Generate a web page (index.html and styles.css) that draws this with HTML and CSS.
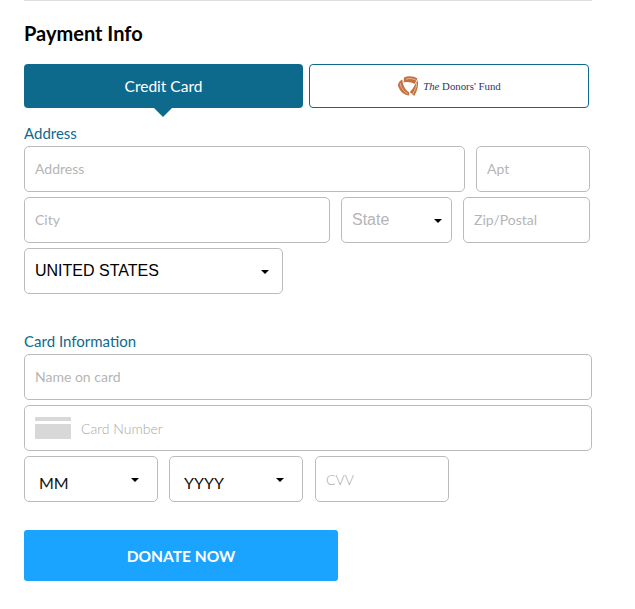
FILE: index.html
```html
<!DOCTYPE html>
<html lang="en">
<head>
    <meta charset="UTF-8">
    <title>Payment Info</title>
    <link rel="stylesheet" href="styles.css">
</head>
<body>
    <div class="payment">
        <h2 class="title">Payment Info</h2>

        <div class="tabs">
            <div class="tab tab-active">Credit Card</div>
            <div class="tab tab-fund">
                <svg class="fund-logo" width="22" height="22" viewBox="0 0 22 22">
                    <path fill="#c4703f" d="M7 2.5C11 .6 16 .8 20.5 3.5L17.6 9C15 7.3 10.5 6.4 6.6 7.4Z"/>
                    <path fill="#c4703f" d="M20.8 5C21.6 10 20.6 16 17.2 21L12.8 17C15 15 16.8 12.5 18 9.6Z"/>
                    <path fill="#c4703f" d="M12.2 20.6C7.5 20.4 2.4 16.4 1 10.5 .8 8 2.8 5.4 5.4 4.4 5.4 9 7.6 14.4 12.2 17.2Z"/>
                    <path fill="none" stroke="#fff" stroke-width=".5" d="M9 4.3C12 3 15.5 3.5 18.8 5M19.6 8C19.6 12 18 15.5 15.6 19M3.2 8C3.4 12 6.5 16.5 10.6 18.8"/>
                </svg>
                <span class="fund-name"><em>The</em> Donors' Fund</span>
            </div>
        </div>

        <div class="section-label address-label">Address</div>
        <div class="row">
            <div class="field w-address">Address</div>
            <div class="field w-apt">Apt</div>
        </div>
        <div class="row">
            <div class="field w-city">City</div>
            <div class="field select state w-state">State<span class="caret"></span></div>
            <div class="field w-zip">Zip/Postal</div>
        </div>
        <div class="row">
            <div class="field select country w-country">UNITED STATES<span class="caret"></span></div>
        </div>

        <div class="section-label card-label">Card Information</div>
        <div class="row">
            <div class="field w-full">Name on card</div>
        </div>
        <div class="row">
            <div class="field w-full card-number">
                <svg class="card-icon" width="36" height="22" viewBox="0 0 36 22">
                    <path fill="#d8d8d8" d="M1 0H35A1 1 0 0 1 36 1V4H0V1A1 1 0 0 1 1 0ZM0 7H36V21A1 1 0 0 1 35 22H1A1 1 0 0 1 0 21Z"/>
                </svg>
                Card Number
            </div>
        </div>
        <div class="row">
            <div class="field select expiry w-expiry">MM<span class="caret"></span></div>
            <div class="field select expiry w-expiry">YYYY<span class="caret"></span></div>
            <div class="field cvv w-cvv">CVV</div>
        </div>

        <button class="donate">DONATE NOW</button>
    </div>
</body>
</html>
```

FILE: styles.css
```css
body {
    margin: 0;
    padding: 0;
    background: #fff;
    font-family: Lato, sans-serif;
}

.payment {
    width: 568px;
    margin-left: 24px;
    border-top: 1.5px solid #ddd;
}

.title {
    margin: 19px 0 18px;
    font-size: 20px;
    line-height: 26px;
    font-weight: 700;
    color: #000;
}

.tabs {
    display: flex;
    gap: 6px;
    margin-bottom: 16px;
}

.tab {
    box-sizing: border-box;
    height: 44px;
    width: 279px;
    border-radius: 4px;
    display: flex;
    align-items: center;
    justify-content: center;
}

.tab-active {
    position: relative;
    background: #0e6a8c;
    color: #fff;
    font-size: 15.5px;
}

/* little pointer under the selected tab */
.tab-active::after {
    content: "";
    position: absolute;
    top: 44px;
    left: 130px;
    border-left: 9px solid transparent;
    border-right: 9px solid transparent;
    border-top: 9px solid #0e6a8c;
}

.tab-fund {
    width: 280px;
    background: #fff;
    border: 1px solid #0e6a8c;
    gap: 4px;
}

.fund-name {
    font-family: "Liberation Serif", serif;
    font-size: 10.8px;
    color: #2f3560;
}

.section-label {
    font-size: 15px;
    line-height: 18px;
    color: #0e6a8c;
}

.address-label {
    margin-bottom: 4px;
}

.card-label {
    margin-top: 38px;
    margin-bottom: 4px;
}

.row {
    display: flex;
    margin-bottom: 5px;
    gap: 11px;
}

.field {
    box-sizing: border-box;
    height: 46px;
    padding: 0 10px 2px;
    border: 1px solid #bbb;
    border-radius: 5px;
    display: flex;
    align-items: center;
    font-size: 14px;
    color: #b5b5b5;
}

.w-address { width: 441px; }
.w-apt { width: 114px; }
.w-city { width: 306px; }
.w-state { width: 111px; }
.w-zip { width: 127px; }
.w-country { width: 259px; }
.w-full { width: 568px; }
.w-expiry { width: 134px; }
.w-cvv { width: 134px; margin-left: 1px; }

.select {
    position: relative;
    padding-bottom: 0;
}

.caret {
    position: absolute;
    right: 9px;
    top: 21px;
    border-left: 4px solid transparent;
    border-right: 4px solid transparent;
    border-top: 4px solid #000;
}

.state {
    font-family: "Liberation Sans", sans-serif;
    font-size: 16px;
}

.country {
    font-family: "Liberation Sans", sans-serif;
    font-size: 16px;
    color: #000;
}

.country .caret {
    right: 13px;
}

.expiry {
    padding: 6px 0 0 14px;
    font-size: 16px;
    color: #111;
}

.expiry .caret {
    right: 18px;
}

.card-number {
    padding-bottom: 0;
    gap: 10px;
    font-weight: 300;
    color: #a8a8a8;
}

.cvv {
    padding-bottom: 0;
    font-weight: 300;
    color: #a8a8a8;
}

.donate {
    display: block;
    width: 314px;
    height: 51px;
    margin-top: 28px;
    border: 0;
    border-radius: 3px;
    background: #1aa3ff;
    color: #fff;
    font-family: Lato, sans-serif;
    font-size: 15.5px;
    font-weight: 700;
}
```
